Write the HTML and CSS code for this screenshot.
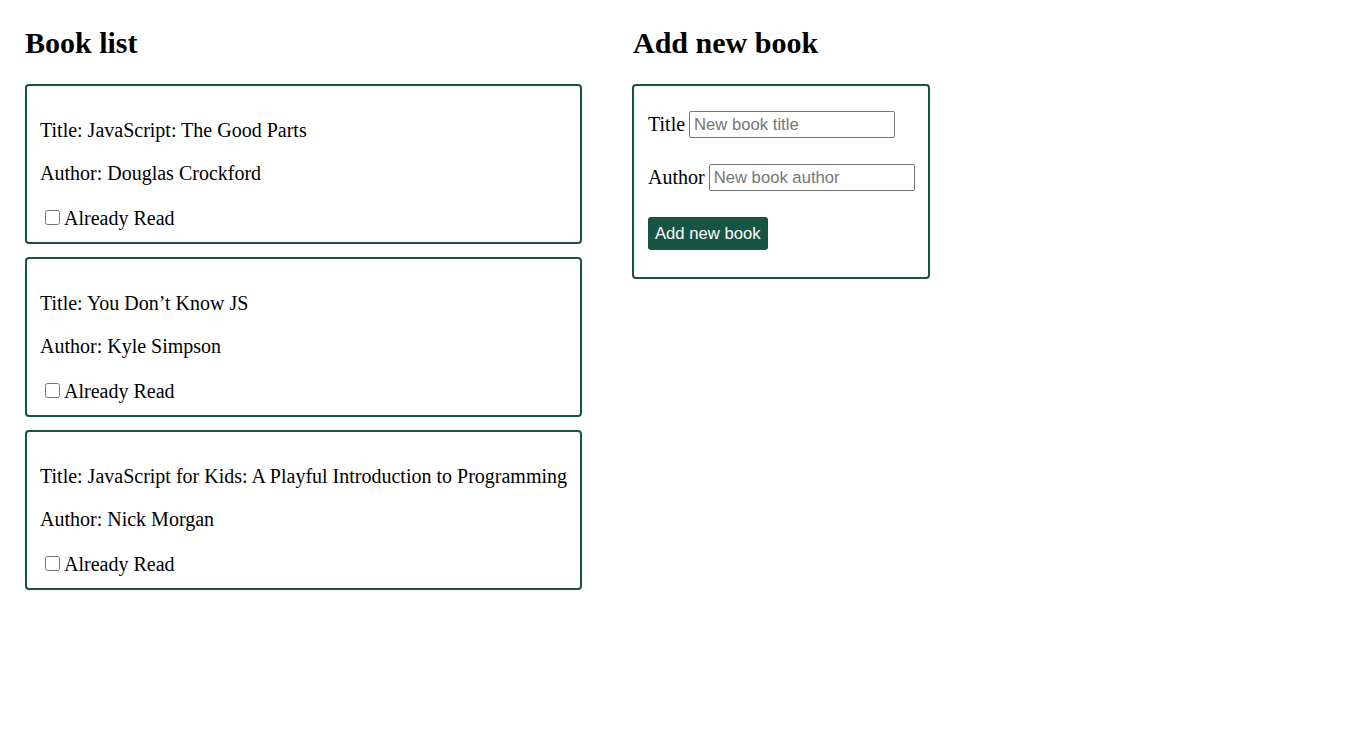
FILE: index.html
```html
<!DOCTYPE html>
<html lang="en">
<head>
<meta charset="utf-8">
<title>Books</title>
<link rel="stylesheet" href="styles.css">
</head>
<body>
<main class="page">
  <section class="col col-list">
    <h2 class="heading">Book list</h2>
    <div class="books">
      <article class="card book">
        <p class="line">Title: JavaScript: The Good Parts</p>
        <p class="line">Author: Douglas Crockford</p>
        <label class="line read"><input type="checkbox" class="check">Already Read</label>
      </article>
      <article class="card book">
        <p class="line">Title: You Don’t Know JS</p>
        <p class="line">Author: Kyle Simpson</p>
        <label class="line read"><input type="checkbox" class="check">Already Read</label>
      </article>
      <article class="card book">
        <p class="line">Title: JavaScript for Kids: A Playful Introduction to Programming</p>
        <p class="line">Author: Nick Morgan</p>
        <label class="line read"><input type="checkbox" class="check">Already Read</label>
      </article>
    </div>
  </section>
  <section class="col col-form">
    <h2 class="heading">Add new book</h2>
    <form class="card add-form">
      <div class="row"><label class="lbl">Title</label><input type="text" class="field" placeholder="New book title"></div>
      <div class="row"><label class="lbl">Author</label><input type="text" class="field" placeholder="New book author"></div>
      <div class="row"><button type="button" class="btn">Add new book</button></div>
    </form>
  </section>
</main>
</body>
</html>
```
FILE: styles.css
```css
html, body {
  margin: 0;
  padding: 0;
  background: #fff;
}
body {
  font-family: "Liberation Serif", "Times New Roman", serif;
  color: #000;
  font-size: 20px;
}
.page {
  display: flex;
  align-items: flex-start;
  gap: 50px;
  padding: 25px;
}
.col-list { width: 557px; }
.col-form { width: 298px; }
.heading {
  margin: 0 0 24px 1px;
  font-size: 30px;
  line-height: 35px;
  font-weight: bold;
}
.col-list .heading { margin-left: 0; }
.books {
  display: flex;
  flex-direction: column;
  gap: 13px;
}
.card {
  border: 2px solid #185444;
  border-radius: 4px;
  box-sizing: border-box;
}
.book {
  display: flex;
  flex-direction: column;
  gap: 20px;
  height: 160px;
  padding: 33px 13px 0;
}
.line {
  margin: 0;
  line-height: 23px;
  white-space: nowrap;
}
.read {
  display: block;
  height: 23px;
  margin-top: 2px;
}
.check {
  width: 15px;
  height: 15px;
  margin: 0 4px 0 5px;
  vertical-align: baseline;
}
.add-form {
  display: flex;
  flex-direction: column;
  gap: 26px;
  padding: 25px 13px 27px 14px;
  margin: 0;
}
.row {
  display: flex;
  align-items: center;
  gap: 4px;
  height: 27px;
}
.row:last-child { height: 33px; }
.lbl {
  line-height: 23px;
}
.field {
  box-sizing: border-box;
  width: 206px;
  height: 27px;
  border: 1px solid #767676;
  border-radius: 2px;
  padding: 0 4px;
  font-family: "Liberation Sans", Arial, sans-serif;
  font-size: 16.67px;
  color: #000;
}
.field::placeholder { color: #757575; }
.btn {
  height: 33px;
  padding: 0 7px;
  border: none;
  border-radius: 3px;
  background: #165443;
  color: #fff;
  font-family: "Liberation Sans", Arial, sans-serif;
  font-size: 16.67px;
}
```
